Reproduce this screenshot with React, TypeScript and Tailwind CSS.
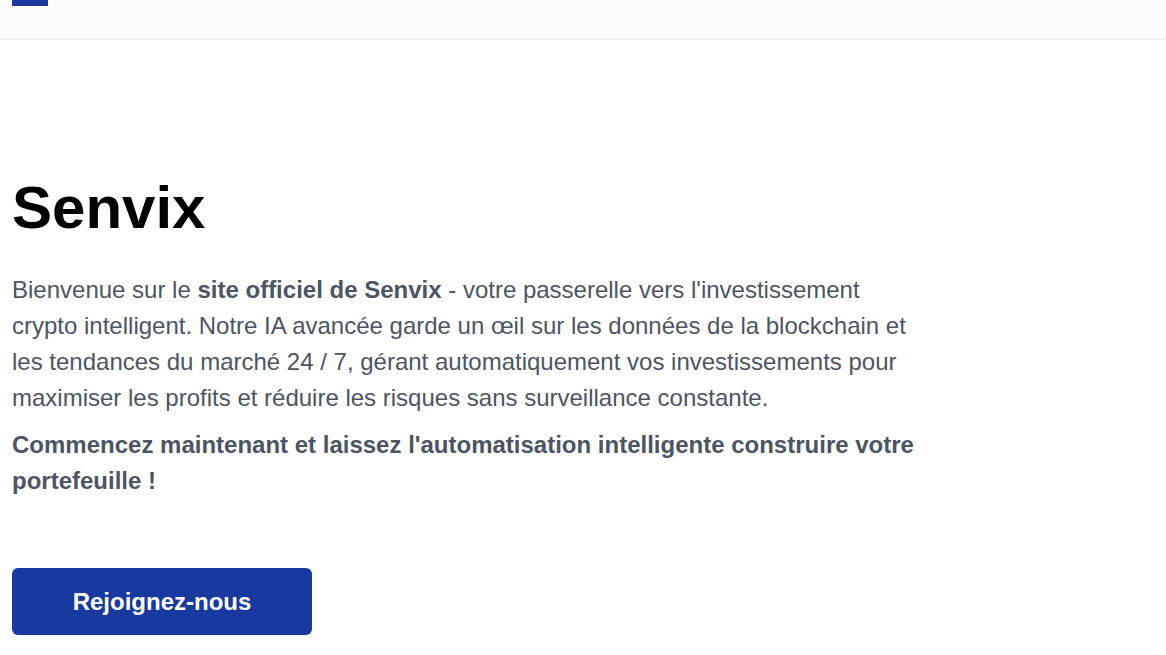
export default function App() {
  return (
    <div className="min-h-screen bg-white" style={{ fontFamily: '"Liberation Sans", Arial, sans-serif' }}>
      <header className="h-10 bg-[#f9fafb] border-b border-[#e5e7eb] px-3">
        <div className="w-9 h-1.5 bg-[#1a37a0]" />
      </header>
      <main className="px-3">
        <div className="max-w-[916px]">
          <h1 className="mt-[138px] text-[60px] leading-[60px] font-bold text-black">Senvix</h1>
          <p className="mt-[34px] text-[24px] leading-[36px] text-[#4b5563]">
            Bienvenue sur le <strong className="font-bold">site officiel de Senvix</strong> - votre passerelle vers l'investissement crypto intelligent. Notre IA avancée garde un œil sur les données de la blockchain et les tendances du marché 24 / 7, gérant automatiquement vos investissements pour maximiser les profits et réduire les risques sans surveillance constante.
          </p>
          <p className="mt-[11px] text-[24px] leading-[36px] font-bold text-[#4b5563]">
            Commencez maintenant et laissez l'automatisation intelligente construire votre portefeuille !
          </p>
          <button className="mt-[69px] w-[300px] h-[67px] rounded-md bg-[#1739a0] text-white text-[24px] font-bold">
            Rejoignez-nous
          </button>
        </div>
      </main>
    </div>
  );
}
